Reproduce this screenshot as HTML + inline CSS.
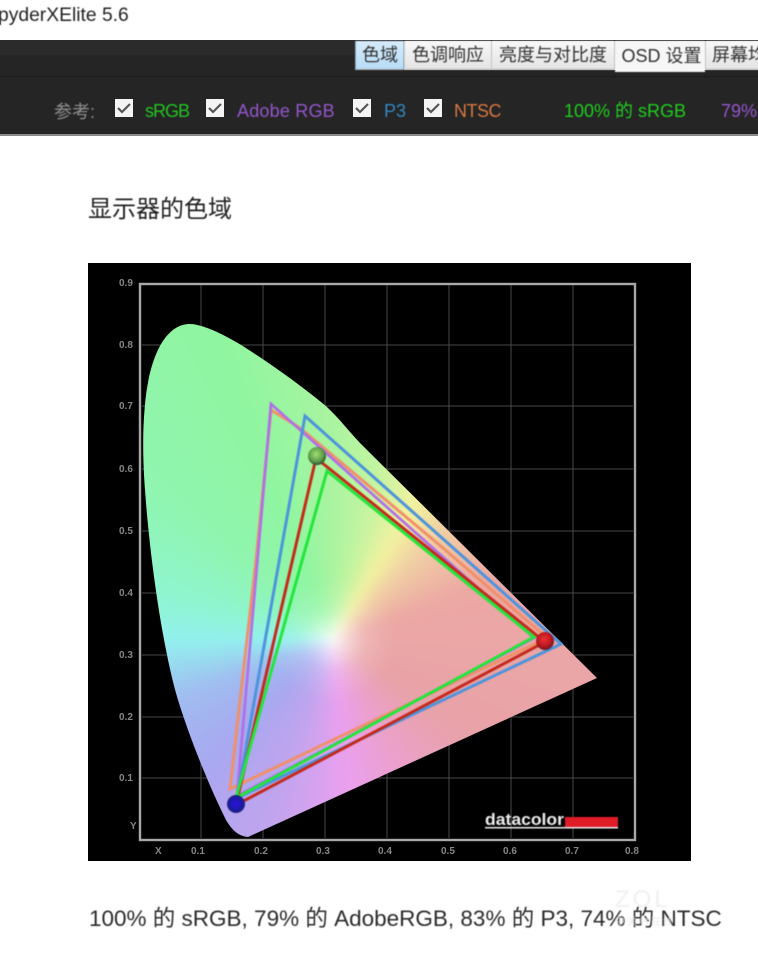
<!DOCTYPE html>
<html><head><meta charset="utf-8"><style>
html,body{margin:0;padding:0;background:#fff}
body{width:758px;height:948px;overflow:hidden;position:relative;font-family:"Liberation Sans","Noto Sans CJK SC",sans-serif}
.t{position:absolute;white-space:nowrap;filter:blur(.4px)}
.tab{position:absolute;top:41px;height:29px;line-height:29px;text-align:center;font-size:18px;color:#333;background:linear-gradient(#f8f8f8,#e4e4e4);border-bottom:1px solid #aaa;box-sizing:border-box;white-space:nowrap;overflow:hidden;filter:blur(.4px)}
.cb{position:absolute;top:99px;width:18px;height:18px;background:#f4f4f4}
.cb svg{display:block}
#clip{position:absolute;left:0;top:0;width:758px;height:948px;
clip-path:path("M248 837C238 836 232 830 226 820C212 792 192 745 178 700C163 650 150 560 145 490C142 450 143 420 146 395C152 350 168 324 190 324C205 324 235 340 255 354C275 367 300 385 321 402C335 413 346 428 360 443L597 678Z")}
#g{position:absolute;left:-20px;top:-20px;width:798px;height:988px;filter:blur(5px);
background:radial-gradient(circle at 353px 660px,rgba(255,255,255,.95) 0,rgba(255,255,255,.6) 12px,rgba(255,255,255,.18) 32px,rgba(255,255,255,0) 60px),
conic-gradient(from 0deg at 353px 660px,#aaf4a0 0deg,#c4f4a0 15deg,#f3f1a0 31deg,#f0cfa4 45deg,#eca8a4 70deg,#e8a2a8 125deg,#eba0c8 150deg,#eaa0ee 175deg,#c0a4ee 200deg,#a8a8f0 225deg,#a0bdf0 250deg,#92f0ee 270deg,#8ff5d0 285deg,#8ff5b0 310deg,#90f5a0 340deg,#aaf4a0 360deg)}
</style></head><body>
<div class="t" style="left:-2px;top:5px;font-size:19.3px;color:#222">pyderXElite 5.6</div>
<div style="position:absolute;left:0;top:40px;width:758px;height:95px;background:#252525"></div>
<div style="position:absolute;left:0;top:40px;width:758px;height:15px;background:#2b2b2b"></div>
<div style="position:absolute;left:0;top:76px;width:758px;height:1px;background:#1c1c1c"></div>
<div style="position:absolute;left:0;top:134px;width:758px;height:2px;background:#8a8a8a"></div>
<div style="position:absolute;left:404px;top:41px;width:354px;height:29px;background:#c4c4c4"></div>
<div class="tab" style="left:355px;width:49px;background:linear-gradient(#d6ebfb,#b7dcf6);border-left:1px solid #8ab">色域</div>
<div class="tab" style="left:405px;width:86px">色调响应</div>
<div class="tab" style="left:492px;width:122px">亮度与对比度</div>
<div class="tab" style="left:615px;width:90px;height:31px;line-height:31px;background:#f6f6f6;border:0;padding-left:3px">OSD 设置</div>
<div class="tab" style="left:706px;width:60px;text-align:left;padding-left:6px">屏幕均</div>
<div class="t" style="left:54px;top:98px;font-size:18px;color:#909090">参考:</div>
<div class="cb" style="left:115px"><svg width="18" height="18"><path d="M3 9l4 4 8-8" fill="none" stroke="#555" stroke-width="2.2"/></svg></div>
<div class="t" style="left:145px;top:101px;font-size:18px;letter-spacing:-1px;color:#22c422">sRGB</div>
<div class="cb" style="left:206px"><svg width="18" height="18"><path d="M3 9l4 4 8-8" fill="none" stroke="#555" stroke-width="2.2"/></svg></div>
<div class="t" style="left:237px;top:101px;font-size:18px;letter-spacing:.2px;color:#9556cc">Adobe RGB</div>
<div class="cb" style="left:353px"><svg width="18" height="18"><path d="M3 9l4 4 8-8" fill="none" stroke="#555" stroke-width="2.2"/></svg></div>
<div class="t" style="left:384px;top:101px;font-size:18px;color:#3388c4">P3</div>
<div class="cb" style="left:424px"><svg width="18" height="18"><path d="M3 9l4 4 8-8" fill="none" stroke="#555" stroke-width="2.2"/></svg></div>
<div class="t" style="left:454px;top:101px;font-size:18px;letter-spacing:-.5px;color:#d87840">NTSC</div>
<div class="t" style="left:564px;top:97px;font-size:18px;color:#20cc20">100% 的 sRGB</div>
<div class="t" style="left:721px;top:101px;font-size:18px;color:#9556cc">79%</div>
<div class="t" style="left:88px;top:189px;font-size:24px;color:#222">显示器的色域</div>

<div style="position:absolute;left:88px;top:263px;width:603px;height:598px;background:#000"></div>
<svg style="position:absolute;left:0;top:0;filter:blur(.35px)" width="758" height="948" fill="none">
<g stroke="#484848" stroke-width="1">
<path d="M201 285V838M263 285V838M325 285V838M387 285V838M449 285V838M511 285V838M573 285V838"/>
<path d="M142 345H633M142 406H633M142 469H633M142 531H633M142 593H633M142 655H633M142 717H633M142 778H633"/>
</g>
<rect x="140" y="284" width="495" height="556" stroke="#a8a8a8" stroke-width="2.4"/>
<g font-family="Liberation Sans,sans-serif" font-size="10" font-weight="bold" fill="#868686">
<text x="119" y="286">0.9</text><text x="119" y="348">0.8</text><text x="119" y="409">0.7</text><text x="119" y="472">0.6</text><text x="119" y="534">0.5</text><text x="119" y="596">0.4</text><text x="119" y="658">0.3</text><text x="119" y="720">0.2</text><text x="119" y="781">0.1</text><text x="130" y="829">Y</text>
<text x="155" y="854">X</text><text x="191" y="854">0.1</text><text x="254" y="854">0.2</text><text x="316" y="854">0.3</text><text x="378" y="854">0.4</text><text x="441" y="854">0.5</text><text x="503" y="854">0.6</text><text x="565" y="854">0.7</text><text x="625" y="854">0.8</text>
</g>
</svg>
<div id="clip"><div id="g"></div></div>
<svg style="position:absolute;left:0;top:0;filter:blur(.4px)" width="758" height="948" fill="none" stroke-width="3">
<path d="M230 789L256 560L271 410L300 428L443 548L547 638Z" stroke="#f0906a"/>
<path d="M271 404L534 638L237 796Z" stroke="#b070e8" stroke-width="2.8"/>
<path d="M305 416L561 644L237 798Z" stroke="#4d94dc"/>
<path d="M316 458L545 642L236 805Z" stroke="#c42a1c"/>
<path d="M327 471L534 637L236 798Z" stroke="#22e63a"/>
<defs>
<radialGradient id="gb" cx=".45" cy=".4" r=".6"><stop offset="0" stop-color="#a0e070"/><stop offset=".7" stop-color="#5a9a48"/><stop offset="1" stop-color="#2d4a30"/></radialGradient>
<radialGradient id="rb" cx=".45" cy=".4" r=".6"><stop offset="0" stop-color="#f03030"/><stop offset=".75" stop-color="#b01520"/><stop offset="1" stop-color="#60202a"/></radialGradient>
<radialGradient id="bb" cx=".5" cy=".5" r=".55"><stop offset="0" stop-color="#2a14e0"/><stop offset=".7" stop-color="#1a1aa0"/><stop offset="1" stop-color="#2a2a60"/></radialGradient>
</defs>
<circle cx="317" cy="456" r="9" fill="url(#gb)" stroke="none"/>
<circle cx="545" cy="641" r="9" fill="url(#rb)" stroke="none"/>
<circle cx="236" cy="804" r="9" fill="url(#bb)" stroke="none"/>
<text x="485" y="825" font-family="Liberation Sans,sans-serif" font-size="17" font-weight="bold" fill="#eee" stroke="none" textLength="79" lengthAdjust="spacingAndGlyphs">datacolor</text>
<rect x="565" y="817" width="53" height="10" fill="#e01c28" stroke="none"/>
<rect x="485" y="827" width="133" height="1.5" fill="#eee" stroke="none"/>
</svg>
<div class="t" style="left:89px;top:901px;font-size:22.5px;color:#2a2a2a">100% 的 sRGB, 79% 的 AdobeRGB, 83% 的 P3, 74% 的 NTSC</div>
<div class="t" style="left:615px;top:886px;font-size:24px;color:rgba(238,238,238,.9);letter-spacing:3px">ZOL</div>
<div class="t" style="left:615px;top:913px;font-size:10px;color:rgba(230,230,230,.85);letter-spacing:2px">中关村在线</div>
</body></html>
